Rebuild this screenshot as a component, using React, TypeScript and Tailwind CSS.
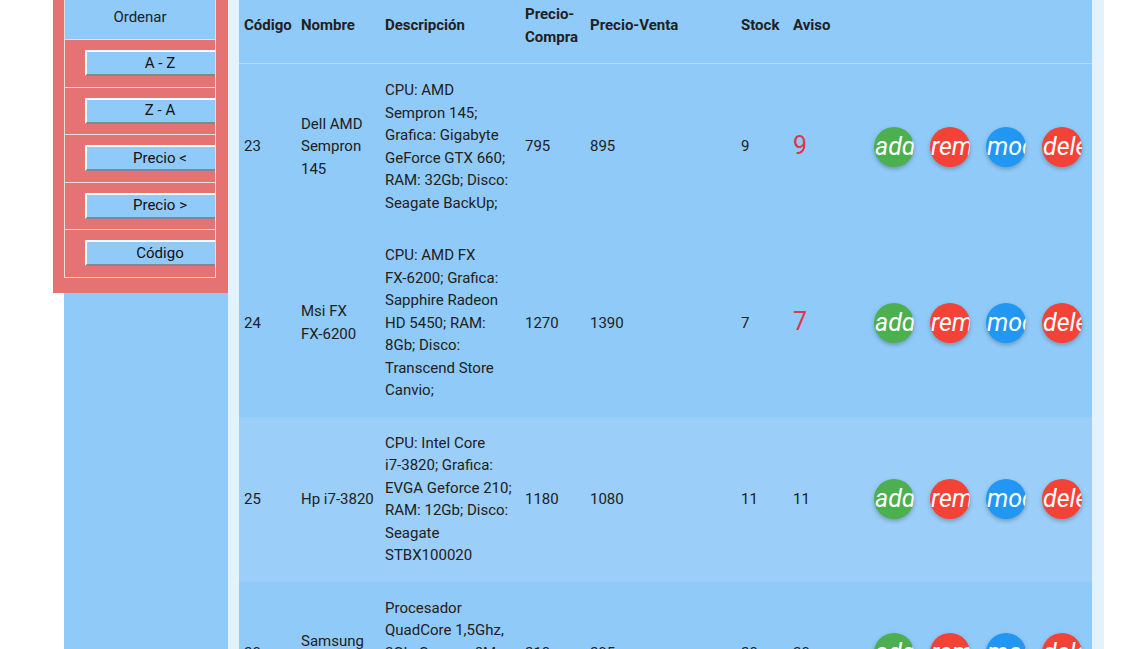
import React from "react";

const SORTS = ["A - Z", "Z - A", "Precio <", "Precio >", "Código"];

type Product = {
    code: number;
    name: string;
    desc: string;
    buy: number;
    sell: number;
    stock: number;
    alert: boolean;
    light?: boolean;
};

const PRODUCTS: Product[] = [
    { code: 23, name: "Dell AMD Sempron 145", desc: "CPU: AMD Sempron 145; Grafica: Gigabyte GeForce GTX 660; RAM: 32Gb; Disco: Seagate BackUp;", buy: 795, sell: 895, stock: 9, alert: true },
    { code: 24, name: "Msi FX FX-6200", desc: "CPU: AMD FX FX-6200; Grafica: Sapphire Radeon HD 5450; RAM: 8Gb; Disco: Transcend Store Canvio;", buy: 1270, sell: 1390, stock: 7, alert: true },
    { code: 25, name: "Hp i7-3820", desc: "CPU: Intel Core i7-3820; Grafica: EVGA Geforce 210; RAM: 12Gb; Disco: Seagate STBX100020", buy: 1180, sell: 1080, stock: 11, alert: false, light: true },
    { code: 20, name: "Samsung Galaxy Tab", desc: "Procesador QuadCore 1,5Ghz, 2Gb, Camara 8Mpx, Pantalla 10,1\"; Android 4.4;", buy: 210, sell: 295, stock: 20, alert: false },
];

const ACTIONS = [
    { label: "add", bg: "bg-[#4caf50]" },
    { label: "remove", bg: "bg-[#f44336]" },
    { label: "mode_edit", bg: "bg-[#2196f3]" },
    { label: "delete", bg: "bg-[#f44336]" },
];

// words with a hyphen never break at the hyphen in the reference
function Words({ text }: { text: string }) {
    const parts = text.split(" ");
    return (
        <>
            {parts.map((w, i) => (
                <React.Fragment key={i}>
                    {w.includes("-") ? <span className="whitespace-nowrap">{w}</span> : w}
                    {i < parts.length - 1 ? " " : ""}
                </React.Fragment>
            ))}
        </>
    );
}

function Sidebar() {
    return (
        <div className="w-[164px] bg-[#90caf9] flex-shrink-0">
            <div className="-ml-[11px] w-[175px] bg-[#e57373] pl-[11px] pr-[12px] pb-[15px]">
                <ul className="border-x border-b border-[#e0e0e0] border-t-0">
                    <li className="h-[39px] bg-[#90caf9] text-center leading-[34px]">Ordenar</li>
                    {SORTS.map(s => (
                        <li key={s} className="h-[47.5px] border-t border-[#e0e0e0] pl-[20px] pt-[10px] overflow-hidden">
                            <button className="w-[150px] h-[26px] bg-[#90caf9] border-2 border-t-white border-l-white border-b-[#7d8a8f] border-r-[#7d8a8f] text-[15px] leading-none text-[#111]">
                                {s}
                            </button>
                        </li>
                    ))}
                </ul>
            </div>
        </div>
    );
}

function ActionButtons() {
    return (
        <div className="flex gap-[16px]">
            {ACTIONS.map((a, i) => (
                <span key={i} className={`w-[40px] h-[40px] rounded-full overflow-hidden flex-shrink-0 shadow-[0_2px_4px_rgba(0,0,0,0.25)] ${a.bg}`}>
                    <i className="block w-[40px] whitespace-nowrap text-white text-[25px] leading-[40px] pl-[1px]">{a.label}</i>
                </span>
            ))}
        </div>
    );
}

export default function App() {
    return (
        <div className="flex h-[649px] overflow-hidden bg-white text-[15px] leading-[1.5] text-[#212121]" style={{ fontFamily: "Roboto, 'Liberation Sans', sans-serif" }}>
            <div className="w-[64px] flex-shrink-0" />
            <Sidebar />
            <div className="flex-shrink-0 bg-[#e3f2fd] pl-[11px] pr-[12px]">
                <table className="w-[853px] table-fixed border-collapse bg-[#90caf9]">
                    <colgroup>
                        <col className="w-[57px]" />
                        <col className="w-[84px]" />
                        <col className="w-[140px]" />
                        <col className="w-[65px]" />
                        <col className="w-[151px]" />
                        <col className="w-[52px]" />
                        <col className="w-[81px]" />
                        <col />
                    </colgroup>
                    <thead>
                        <tr className="border-b border-[#b9dbf7]">
                            {["Código", "Nombre", "Descripción", "Precio-Compra", "Precio-Venta", "Stock", "Aviso", ""].map((h, i) => (
                                <th key={i} className="px-[5px] pt-[3px] pb-[15px] text-left font-bold align-middle">
                                    {h === "Precio-Compra" ? <>Precio-<br />Compra</> : h}
                                </th>
                            ))}
                        </tr>
                    </thead>
                    <tbody>
                        {PRODUCTS.map(p => (
                            <tr key={p.code} className={p.light ? "bg-[#9bcef8]" : ""}>
                                <td className="px-[5px] py-[15px] align-middle">{p.code}</td>
                                <td className="px-[5px] py-[15px] align-middle"><Words text={p.name} /></td>
                                <td className="px-[5px] py-[15px] align-middle"><Words text={p.desc} /></td>
                                <td className="px-[5px] py-[15px] align-middle">{p.buy}</td>
                                <td className="px-[5px] py-[15px] align-middle">{p.sell}</td>
                                <td className="px-[5px] py-[15px] align-middle">{p.stock}</td>
                                <td className="px-[5px] py-[15px] align-middle">
                                    {p.alert ? <span className="text-[25px] leading-none text-[#e2344c]">{p.stock}</span> : p.stock}
                                </td>
                                <td className="px-[5px] py-[15px] align-middle"><ActionButtons /></td>
                            </tr>
                        ))}
                    </tbody>
                </table>
            </div>
        </div>
    );
}
